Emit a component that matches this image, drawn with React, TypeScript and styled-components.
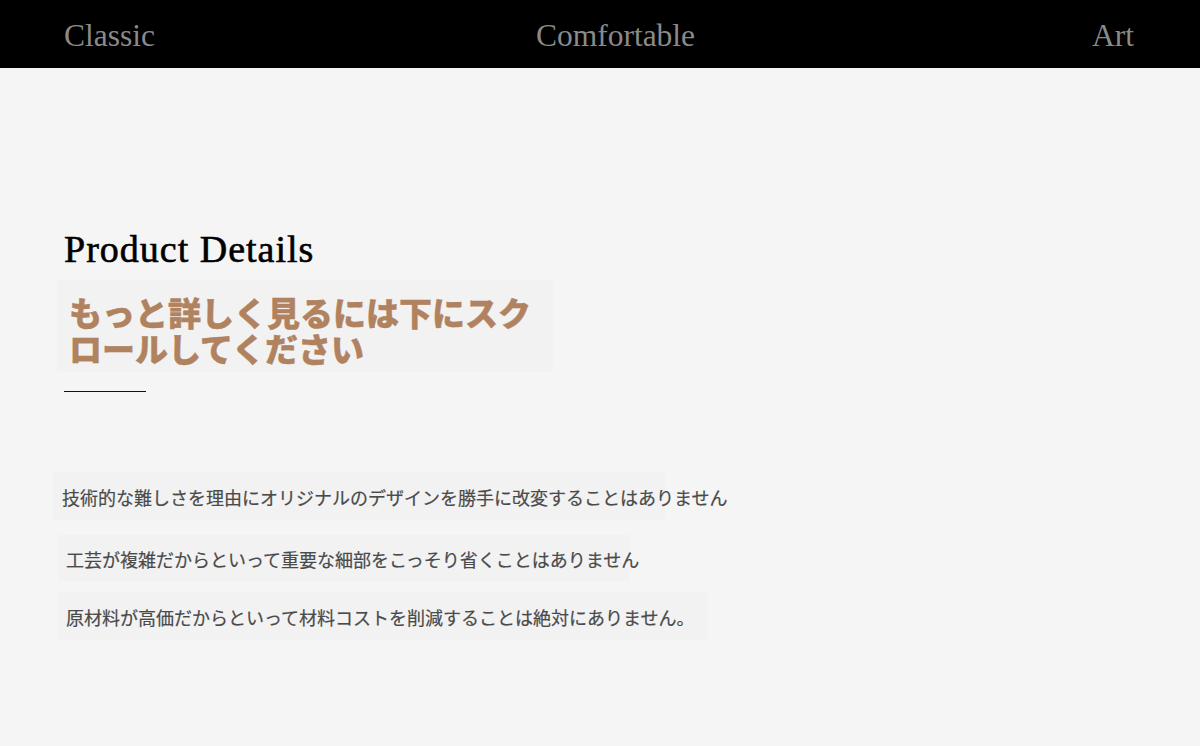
import React from "react"
import styled, { createGlobalStyle } from "styled-components"

const GlobalStyle = createGlobalStyle`
html, body {
    margin: 0;
    padding: 0;
    background: #f5f5f5;
}
body {
    font-family: "Liberation Serif", "Times New Roman", serif;
}
`

const serif = `"Liberation Serif", "Times New Roman", serif`
const jp = `"Noto Sans CJK JP", "Noto Sans", sans-serif`

const navItems = ["Classic", "Comfortable", "Art"]

const promises = [
    { text: "技術的な難しさを理由にオリジナルのデザインを勝手に改変することはありません", offset: -11, pad: 9, width: 612, height: 48, top: 80 },
    { text: "工芸が複雑だからといって重要な細部をこっそり省くことはありません", offset: -6, pad: 8, width: 572, height: 46, top: 15 },
    { text: "原材料が高価だからといって材料コストを削減することは絶対にありません。", offset: -6, pad: 8, width: 650, height: 48, top: 11 },
]

export default function App() {
    return (
        <Page>
            <GlobalStyle />
            <TopBar>
                {navItems.map((item, i) => (
                    <NavItem key={item} $middle={i === 1}>{item}</NavItem>
                ))}
            </TopBar>
            <Content>
                <Title>Product Details</Title>
                <Banner>
                    もっと詳しく見るには下にスク<br />
                    ロールしてください
                </Banner>
                <Rule />
                <List>
                    {promises.map((p) => (
                        <Promise
                            key={p.text}
                            $offset={p.offset}
                            $pad={p.pad}
                            $width={p.width}
                            $height={p.height}
                            $top={p.top}
                        >
                            {p.text}
                        </Promise>
                    ))}
                </List>
            </Content>
        </Page>
    )
}

const Page = styled.div`
min-height: 746px;
background: #f5f5f5;
`

const TopBar = styled.header`
height: 68px;
background: #000;
display: flex;
align-items: center;
justify-content: space-between;
padding: 4px 66px 0 64px;
box-sizing: border-box;
`

const NavItem = styled.span<{ $middle?: boolean }>`
font-family: ${serif};
font-size: 31.5px;
line-height: 1;
color: #8a8a8a;
margin-right: ${(p) => (p.$middle ? 16 : 0)}px;
`

const Content = styled.main`
padding: 161px 0 80px 64px;
display: flex;
flex-direction: column;
align-items: flex-start;
`

const Title = styled.h1`
margin: 0;
font-family: ${serif};
font-weight: 400;
font-size: 38px;
line-height: 40px;
letter-spacing: 1px;
-webkit-text-stroke: 0.6px #000;
color: #000;
`

const Banner = styled.div`
margin: 11px 0 0 -7px;
width: 496px;
height: 92px;
box-sizing: border-box;
padding: 14px 12px 4px;
background: #f2f2f2;
font-family: ${jp};
font-weight: 900;
font-size: 33px;
line-height: 36px;
color: #b0825f;
-webkit-text-stroke: 0.4px #b0825f;
white-space: nowrap;
`

const Rule = styled.div`
margin-top: 19px;
width: 82px;
height: 1px;
background: #111;
`

const List = styled.div`
display: flex;
flex-direction: column;
align-items: flex-start;
`

const Promise = styled.p<{ $offset: number; $pad: number; $width: number; $height: number; $top: number }>`
margin: ${(p) => p.$top}px 0 0 ${(p) => p.$offset}px;
width: ${(p) => p.$width}px;
height: ${(p) => p.$height}px;
line-height: ${(p) => p.$height}px;
padding: 1px 0 0 ${(p) => p.$pad}px;
box-sizing: border-box;
background: #f2f2f2;
font-family: ${jp};
font-size: 18px;
color: #4a4a4a;
-webkit-text-stroke: 0.2px #4a4a4a;
white-space: nowrap;
overflow: visible;
`
